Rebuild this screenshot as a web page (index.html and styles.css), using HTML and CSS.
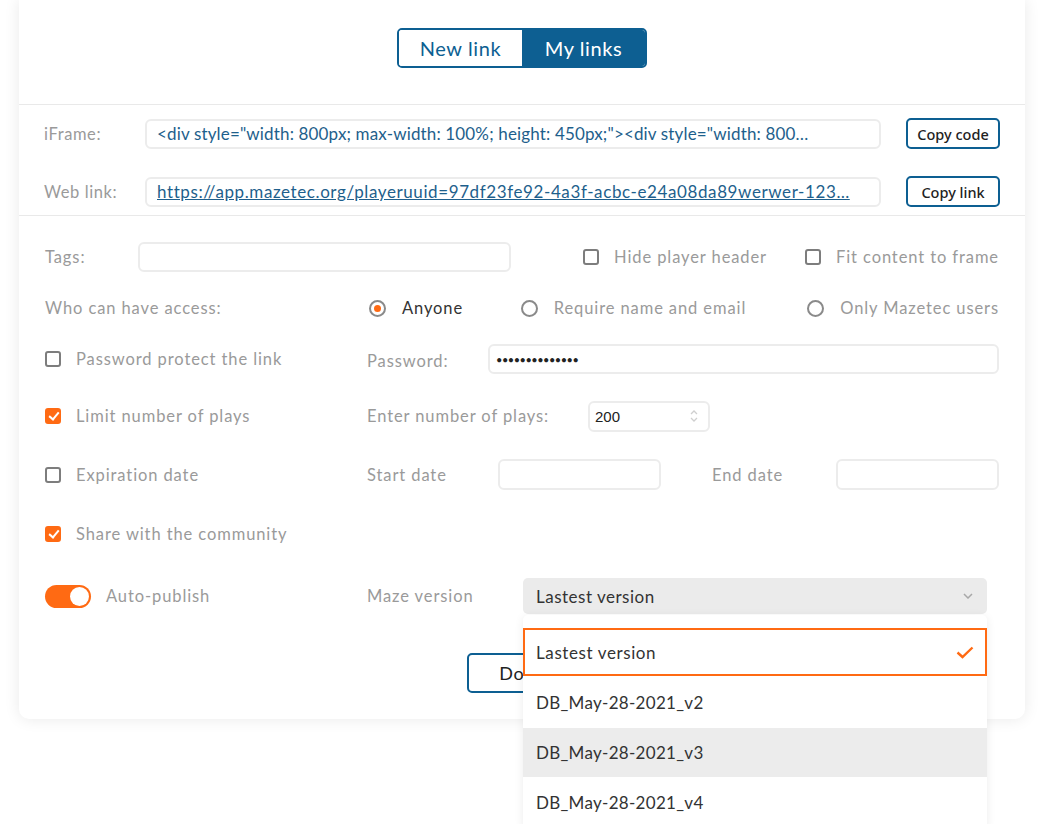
FILE: index.html
```html
<!DOCTYPE html>
<html lang="en">
<head>
<meta charset="utf-8">
<title>Share links</title>
<link rel="stylesheet" href="styles.css">
</head>
<body>
<div class="card">
  <div class="top">
    <div class="seg">
      <span class="seg-item">New link</span>
      <span class="seg-item active">My links</span>
    </div>
  </div>

  <div class="embed">
    <div class="embed-row">
      <span class="embed-label">iFrame:</span>
      <div class="field code">&lt;div style="width: 800px; max-width: 100%; height: 450px;"&gt;&lt;div style="width: 800…</div>
      <button class="copy">Copy code</button>
    </div>
    <div class="embed-row">
      <span class="embed-label">Web link:</span>
      <div class="field code link">https://app.mazetec.org/playeruuid=97df23fe92-4a3f-acbc-e24a08da89werwer-123…</div>
      <button class="copy">Copy link</button>
    </div>
  </div>

  <div class="options">
    <div class="row tags-row">
      <span class="lbl tags-lbl">Tags:</span>
      <div class="field tags-field"></div>
      <div class="right-checks">
        <span class="check"><span class="box"></span>Hide player header</span>
        <span class="check"><span class="box"></span>Fit content to frame</span>
      </div>
    </div>

    <div class="row">
      <span class="lbl col1">Who can have access:</span>
      <span class="radio r-any"><span class="circle on"></span><span class="dark">Anyone</span></span>
      <span class="radio r-req"><span class="circle"></span>Require name and email</span>
      <span class="radio r-only"><span class="circle"></span>Only Mazetec users</span>
    </div>

    <div class="row r-pw">
      <span class="check col1"><span class="box"></span>Password protect the link</span>
      <span class="lbl pw-lbl">Password:</span>
      <div class="field grow pw">••••••••••••••</div>
    </div>

    <div class="row r-limit">
      <span class="check col1"><span class="box checked"></span>Limit number of plays</span>
      <span class="lbl plays-lbl">Enter number of plays:</span>
      <div class="field num">200
        <svg class="spin" width="8" height="16" viewBox="0 0 8 16"><path d="M1 6 L4 3 L7 6 M1 10 L4 13 L7 10" fill="none" stroke="#cfcfcf" stroke-width="1.3"/></svg>
      </div>
    </div>

    <div class="row r-exp">
      <span class="check col1"><span class="box"></span>Expiration date</span>
      <span class="lbl start-lbl">Start date</span>
      <div class="field date"></div>
      <span class="lbl end-lbl">End date</span>
      <div class="field grow"></div>
    </div>

    <div class="row r-share">
      <span class="check col1"><span class="box checked"></span>Share with the community</span>
    </div>

    <div class="row r-auto">
      <span class="check col1"><span class="toggle"><span class="knob"></span></span>Auto-publish</span>
      <span class="lbl maze-lbl">Maze version</span>
      <div class="select-wrap">
        <div class="select">Lastest version
          <svg class="chev" width="10" height="6" viewBox="0 0 10 6"><path d="M1 1 L5 5 L9 1" fill="none" stroke="#a8a8a8" stroke-width="1.5"/></svg>
        </div>
        <div class="menu">
          <div class="opt selected">Lastest version
            <svg class="tick" width="18" height="13" viewBox="0 0 18 13"><path d="M1.5 6.5 L6.5 11 L16.5 1.5" fill="none" stroke="#ff6a13" stroke-width="2.4"/></svg>
          </div>
          <div class="opt tall">DB_May-28-2021_v2</div>
          <div class="opt hover">DB_May-28-2021_v3</div>
          <div class="opt">DB_May-28-2021_v4</div>
        </div>
      </div>
    </div>

    <div class="done-row">
      <button class="done">Done</button>
    </div>
  </div>
</div>
</body>
</html>
```

FILE: styles.css
```css
* { box-sizing: border-box; }
html, body { margin: 0; padding: 0; }
body {
  background: #ffffff;
  font-family: "Lato", "Open Sans", sans-serif;
  width: 1044px;
  height: 824px;
  overflow: hidden;
}
.card {
  margin-left: 19px;
  width: 1006px;
  background: #fff;
  border-radius: 0 0 10px 10px;
  box-shadow: 0 0 16px rgba(0,0,0,0.09);
}
.top {
  display: flex;
  justify-content: center;
  padding: 28px 0 36px;
  border-bottom: 1px solid #e9e9e9;
}
.seg {
  display: flex;
  border: 2px solid #0d5f92;
  border-radius: 5px;
  overflow: hidden;
  height: 40px;
}
.seg-item {
  width: 123px;
  display: flex;
  align-items: center;
  justify-content: center;
  font-size: 20px;
  letter-spacing: 0.6px;
  color: #0d5f92;
  background: #fff;
}
.seg-item.active {
  background: #0d5f92;
  color: #fff;
}
.embed {
  padding: 13px 25px 8px 25px;
  border-bottom: 1px solid #e9e9e9;
  display: flex;
  flex-direction: column;
  gap: 27px;
}
.embed-row {
  display: flex;
  align-items: center;
  height: 31px;
}
.embed-label {
  width: 101px;
  font-size: 16.5px;
  letter-spacing: 0.6px;
  color: #9a9a9a;
}
.field {
  height: 30px;
  border: 2px solid #ececec;
  border-radius: 6px;
  background: #fff;
}
.code {
  width: 736px;
  padding: 0 10px;
  display: flex;
  align-items: center;
  font-size: 17px;
  letter-spacing: 0.15px;
  color: #1e5f8c;
  white-space: nowrap;
  overflow: hidden;
}
.link { text-decoration: underline; letter-spacing: 0.6px; }
.copy {
  margin-left: auto;
  margin-right: 0;
  width: 94px;
  height: 31px;
  border: 2px solid #0d5f92;
  border-radius: 5px;
  background: #fff;
  font-family: "Noto Sans", "Open Sans", sans-serif;
  font-size: 14.5px;
  font-weight: 500;
  color: #222;
  padding: 0;
}
.options {
  padding: 26px 26px 26px 26px;
  display: flex;
  flex-direction: column;
}
.row {
  display: flex;
  align-items: center;
  height: 30px;
  margin-bottom: 21px;
  font-size: 16.5px;
  letter-spacing: 0.9px;
  color: #9a9a9a;
}
.r-pw { margin-bottom: 27px; }
.r-limit { margin-bottom: 28px; }
.r-exp { margin-bottom: 29px; height: 31px; }
.r-share { margin-bottom: 29px; }
.r-auto { height: 36px; margin-bottom: 39px; }
.lbl { color: #9a9a9a; }
.col1 { width: 322px; flex-shrink: 0; }
.tags-lbl { width: 93px; }
.tags-field { width: 373px; }
.right-checks {
  margin-left: auto;
  display: flex;
  gap: 38px;
}
.check {
  display: flex;
  align-items: center;
  gap: 15px;
  color: #9a9a9a;
  white-space: nowrap;
}
.box {
  width: 16px;
  height: 16px;
  border: 2px solid #7d7d7d;
  border-radius: 3px;
  flex-shrink: 0;
  position: relative;
}
.box.checked {
  background: #ff6a13;
  border-color: #ff6a13;
}
.box.checked::after {
  content: "";
  position: absolute;
  left: 3.5px;
  top: 0px;
  width: 4px;
  height: 8px;
  border-right: 2.2px solid #fff;
  border-bottom: 2.2px solid #fff;
  transform: rotate(40deg);
}
.radio {
  display: flex;
  align-items: center;
  gap: 16px;
  white-space: nowrap;
}
.r-any { width: 152px; margin-left: 2px; }
.r-req { width: 287px; }
.circle {
  width: 17px;
  height: 17px;
  border: 2px solid #8a8a8a;
  border-radius: 50%;
  flex-shrink: 0;
  display: flex;
  align-items: center;
  justify-content: center;
}
.circle.on::after {
  content: "";
  width: 7px;
  height: 7px;
  border-radius: 50%;
  background: #ff6a13;
}
.dark { color: #333; }
.pw-lbl { width: 121px; padding-top: 3px; }
.grow { flex: 1; }
.pw {
  display: flex;
  align-items: center;
  padding: 0 6px;
  color: #222;
  font-size: 11px;
  letter-spacing: -0.5px;
}
.plays-lbl { width: 221px; }
.num {
  width: 122px;
  height: 31px;
  display: flex;
  align-items: center;
  justify-content: space-between;
  padding: 0 10px 0 5px;
  font-family: "Liberation Sans", sans-serif;
  font-size: 15px;
  letter-spacing: 0;
  color: #222;
}
.start-lbl { width: 131px; }
.date { width: 163px; height: 31px; }
.end-lbl { width: 124px; margin-left: 51px; }
.r-exp .grow { height: 31px; }
.toggle {
  width: 46px;
  height: 23px;
  border-radius: 12px;
  background: #ff6a13;
  display: flex;
  align-items: center;
  justify-content: flex-end;
  padding: 0 2px;
  flex-shrink: 0;
}
.knob {
  width: 19px;
  height: 19px;
  border-radius: 50%;
  background: #fff;
}
.maze-lbl { width: 156px; }
.select-wrap {
  width: 464px;
  height: 36px;
  position: relative;
}
.select {
  height: 36px;
  background: #ebebeb;
  border-radius: 5px;
  display: flex;
  align-items: center;
  justify-content: space-between;
  padding: 0 14px 0 13px;
  font-size: 17px;
  letter-spacing: 0.5px;
  color: #333;
}
.menu {
  position: absolute;
  left: 0;
  top: 37px;
  width: 464px;
  background: #fff;
  border-radius: 5px 5px 0 0;
  box-shadow: 0 2px 10px rgba(0,0,0,0.08);
  padding-top: 13px;
  z-index: 5;
  letter-spacing: 0.3px;
}
.opt {
  height: 50px;
  display: flex;
  align-items: center;
  justify-content: space-between;
  padding: 0 13px;
  font-size: 17px;
  color: #333;
}
.opt.tall { height: 52px; }
.opt.selected {
  height: 48px;
  border: 2px solid #ff6a13;
  padding: 0 11px 0 11px;
  letter-spacing: 0.6px;
}
.opt.hover { background: #ececec; height: 49px; }
.done-row {
  display: flex;
  justify-content: center;
}
.done {
  width: 110px;
  height: 40px;
  border: 2px solid #0d5f92;
  border-radius: 5px;
  background: #fff;
  font-family: "Lato", sans-serif;
  font-size: 18px;
  letter-spacing: 0.5px;
  color: #222;
}
```
